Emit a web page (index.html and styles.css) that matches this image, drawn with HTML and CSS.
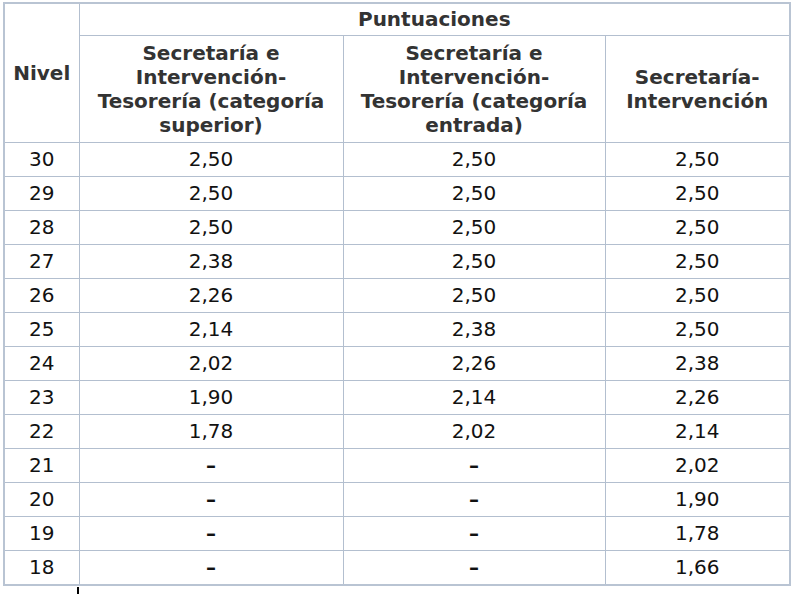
FILE: index.html
```html
<!DOCTYPE html>
<html lang="es">
<head>
<meta charset="utf-8">
<title>Puntuaciones</title>
<link rel="stylesheet" href="styles.css">
</head>
<body>
<table class="tabla">
  <colgroup>
    <col class="c-nivel">
    <col class="c-a">
    <col class="c-b">
    <col class="c-c">
  </colgroup>
  <thead>
    <tr>
      <th rowspan="2">Nivel</th>
      <th colspan="3" class="th-top">Puntuaciones</th>
    </tr>
    <tr>
      <th>Secretaría e<br>Intervención-<br>Tesorería (categoría<br>superior)</th>
      <th>Secretaría e<br>Intervención-<br>Tesorería (categoría<br>entrada)</th>
      <th>Secretaría-<br>Intervención</th>
    </tr>
  </thead>
  <tbody>
    <tr><td>30</td><td>2,50</td><td>2,50</td><td>2,50</td></tr>
    <tr><td>29</td><td>2,50</td><td>2,50</td><td>2,50</td></tr>
    <tr><td>28</td><td>2,50</td><td>2,50</td><td>2,50</td></tr>
    <tr><td>27</td><td>2,38</td><td>2,50</td><td>2,50</td></tr>
    <tr><td>26</td><td>2,26</td><td>2,50</td><td>2,50</td></tr>
    <tr><td>25</td><td>2,14</td><td>2,38</td><td>2,50</td></tr>
    <tr><td>24</td><td>2,02</td><td>2,26</td><td>2,38</td></tr>
    <tr><td>23</td><td>1,90</td><td>2,14</td><td>2,26</td></tr>
    <tr><td>22</td><td>1,78</td><td>2,02</td><td>2,14</td></tr>
    <tr><td>21</td><td class="nd">–</td><td class="nd">–</td><td>2,02</td></tr>
    <tr><td>20</td><td class="nd">–</td><td class="nd">–</td><td>1,90</td></tr>
    <tr><td>19</td><td class="nd">–</td><td class="nd">–</td><td>1,78</td></tr>
    <tr><td>18</td><td class="nd">–</td><td class="nd">–</td><td>1,66</td></tr>
  </tbody>
</table>
<div class="cursor"></div>
</body>
</html>
```
FILE: styles.css
```css
html, body {
  margin: 0;
  padding: 0;
  background: #ffffff;
}
body {
  padding: 2px 0 0 3px;
  font-family: "DejaVu Sans", Verdana, sans-serif;
  font-size: 20px;
  line-height: 24px;
  color: #111111;
}
.tabla {
  border-collapse: collapse;
  table-layout: fixed;
  width: 786px;
  border: 2px solid #b9c4d3;
}
.c-nivel { width: 75px; }
.c-a { width: 264px; }
.c-b { width: 262px; }
.c-c { width: 185px; }
.tabla th,
.tabla td {
  border: 1px solid #b3bfcf;
  text-align: center;
  vertical-align: middle;
}
.tabla td {
  padding: 4px 2px 5px;
}
.tabla th {
  padding: 5px 2px;
  font-weight: bold;
  color: #333333;
}
.tabla .th-top {
  padding: 3px 2px 4px;
}
.tabla .nd {
  font-weight: bold;
}
.cursor {
  width: 2px;
  height: 7px;
  margin: 1px 0 0 74px;
  background: #000000;
}
```
